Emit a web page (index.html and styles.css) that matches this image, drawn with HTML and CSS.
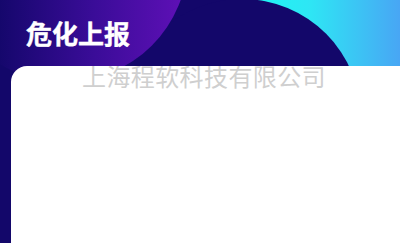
FILE: index.html
```html
<!DOCTYPE html>
<html lang="zh-CN">
<head>
<meta charset="utf-8">
<link rel="stylesheet" href="styles.css">
</head>
<body>
<div class="page">
  <div class="deco deco-cyan"></div>
  <div class="deco deco-navy"></div>
  <div class="deco deco-purple"></div>
  <header class="header">
    <h1 class="title">危化上报</h1>
  </header>
  <main class="card">
    <div class="watermark">上海程软科技有限公司</div>
  </main>
</div>
</body>
</html>
```

FILE: styles.css
```css
* { box-sizing: border-box; }
html, body {
  margin: 0;
  padding: 0;
  width: 400px;
  height: 243px;
  overflow: hidden;
}
body {
  font-family: "Noto Sans CJK SC", "Noto Sans", sans-serif;
  background: #13076a;
}
.page {
  position: relative;
  width: 400px;
  height: 243px;
  display: flex;
  flex-direction: column;
  overflow: hidden;
  background: #13076a;
}
.deco {
  position: absolute;
  z-index: 0;
}
.deco-cyan {
  left: 250px;
  top: 0;
  width: 150px;
  height: 80px;
  background: linear-gradient(to right, #1ef6f4 0%, #2ee6f4 40%, #48a6f4 100%);
}
.deco-navy {
  left: 123px;
  top: -1px;
  width: 238px;
  height: 238px;
  border-radius: 50%;
  background: #13076a;
}
.deco-purple {
  left: -60px;
  top: -166px;
  width: 248px;
  height: 248px;
  border-radius: 50%;
  background: linear-gradient(to right, #13076a 22%, #3a0c98 62%, #6010b8 100%);
}
.header {
  position: relative;
  z-index: 1;
  height: 66px;
  padding: 20px 0 0 26px;
  flex: none;
}
.title {
  margin: 0;
  font-size: 26px;
  line-height: 26px;
  font-weight: 700;
  color: #ffffff;
  letter-spacing: 0;
  -webkit-text-stroke: 0.4px #ffffff;
}
.card {
  position: relative;
  z-index: 2;
  flex: 1;
  margin-left: 11px;
  background: #ffffff;
  border-top-left-radius: 16px;
  overflow: hidden;
}
.watermark {
  margin-top: -2px;
  padding-right: 3px;
  text-align: center;
  font-size: 24px;
  line-height: 24px;
  font-weight: 400;
  letter-spacing: 0.4px;
  color: #cfcfcf;
  white-space: nowrap;
}
```
